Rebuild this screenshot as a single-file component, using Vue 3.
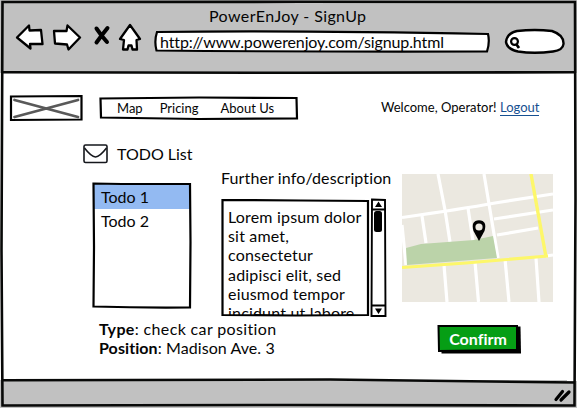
<script setup>
const menu = [
  { label: 'Map', cls: 'm-map' },
  { label: 'Pricing', cls: 'm-pricing' },
  { label: 'About Us', cls: 'm-about' },
]
const todos = ['Todo 1', 'Todo 2']
const lines = [
  'Lorem ipsum dolor',
  'sit amet,',
  'consectetur',
  'adipisci elit, sed',
  'eiusmod tempor',
  'incidunt ut labore',
]
</script>

<template>
  <div class="window">
    <header class="chrome">
      <div class="title"><span>PowerEnJoy - SignUp</span></div>
      <div class="toolbar">
        <svg class="back" viewBox="0 0 29 28" width="29" height="28">
          <path class="ico" d="M2 14.5 L14 2.5 L14.5 7.5 L26 7 L27.5 21 L15 21 L15.5 25.5 Z" />
        </svg>
        <svg class="forward" viewBox="0 0 30 28" width="30" height="28">
          <path class="ico" d="M2 8 L14.500 8 L15.500 2.500 L28 14.500 L16.500 26.500 L15 21.500 L3 20.500 Z" />
        </svg>
        <svg class="stop" viewBox="0 0 18 21" width="18" height="21">
          <path d="M3.500 3.500 L8.500 10.500 L14 17 M14.500 3 L9 10 L3.500 17.500" stroke="#000" stroke-width="4" stroke-linecap="round" fill="none" />
        </svg>
        <svg class="home" viewBox="0 0 24 29" width="24" height="29">
          <path class="ico" d="M12 2 L22 16 L18.500 17 L19 26.500 L14.500 26.500 L13.500 22.500 L10.500 22.500 L9.500 26.500 L5 26.500 L6 17 L2 16 Z" />
        </svg>
        <div class="url">
          <svg class="sketch" viewBox="0 0 337 24">
            <path d="M3 2 C80 1 180 1 334 4 Q336 12 333 21.500 Q160 22 2.500 20.500 Q0 11 3 2 Z" fill="#fff" />
          </svg>
          <span>http://www.powerenjoy.com/signup.html</span>
        </div>
        <svg class="search" viewBox="0 0 62 27" width="62" height="27">
          <path d="M13 3 Q31 1 48 3 Q60 7 59.500 16 Q59 22 49 23.500 Q30 26 14 23.500 Q3 21 2 14 Q3 5 13 3 Z" fill="#fff" stroke="#000" stroke-width="2.400" />
          <circle cx="10.500" cy="13.500" r="3.400" fill="#fff" stroke="#000" stroke-width="2.200" />
          <path d="M12.500 16.500 L15 20" stroke="#000" stroke-width="2.800" />
        </svg>
      </div>
    </header>

    <main class="page">
      <nav class="topbar">
        <svg class="logo" viewBox="0 0 74 28" width="74" height="28">
          <path d="M2 2.500 L72.500 2 L72.500 25.500 L2 26 Z" fill="#fff" stroke="#000" stroke-width="2.200" />
          <path d="M5.500 6 L69 23 M5.500 23 L69 6" stroke="#595959" stroke-width="2.800" stroke-linecap="round" />
        </svg>
        <div class="menu">
          <svg class="sketch" viewBox="0 0 200 25">
            <path d="M1.500 2.500 L100 1.500 L197.500 2 L198 22.500 L100 23 L2 21.500 Z" />
          </svg>
          <span v-for="m in menu" :key="m.label" :class="m.cls">{{ m.label }}</span>
        </div>
        <div class="account"><span>Welcome, Operator!</span> <a>Logout</a></div>
      </nav>

      <div class="body">
        <section class="left">
          <div class="heading">
            <svg viewBox="0 0 25 20" width="25" height="20">
              <rect x="1" y="1" width="23" height="17.500" rx="1.500" fill="#fff" stroke="#15171c" stroke-width="1.600" />
              <path d="M1.500 4 Q8 12.500 12.500 13 Q17 12.500 23.500 4" fill="none" stroke="#15171c" stroke-width="1.600" />
            </svg>
            <h1>TODO List</h1>
          </div>
          <div class="columns">
            <ul class="todos">
              <li v-for="(t, i) in todos" :key="t" :class="{ active: i === 0 }">{{ t }}</li>
              <svg class="sketch" viewBox="0 0 100 127">
                <path d="M1.500 1.500 L30 2 L98 2 L98.500 60 L98 125.500 Q50 126 1.500 124.500 L2 65 Z" />
              </svg>
            </ul>
            <div class="info">
              <h2>Further info/description</h2>
              <div class="reader">
                <div class="text">
                  <p><span v-for="l in lines" :key="l">{{ l }}</span></p>
                  <svg class="sketch" viewBox="0 0 149 119">
                    <path d="M1.500 2 L80 2.500 L147 3 L147 117 L75 117.500 L1.500 117 Z" />
                  </svg>
                </div>
                <svg class="scroll" viewBox="0 0 17 120" width="17" height="120">
                  <path d="M2 1.500 L15 2 L15.500 118 L1.500 118 Z M2 11.500 H15.500 M2 107.500 H15.500" fill="#fff" stroke="#000" stroke-width="1.900" />
                  <path d="M8.500 3.500 L12 9 L5 9 Z M5 110.500 L12 110.500 L8.500 116 Z" />
                  <rect x="4" y="13" width="8" height="21" rx="2.500" />
                </svg>
              </div>
            </div>
          </div>
          <div class="details">
            <div class="d-type"><b>Type</b>: check car position</div>
            <div class="d-pos"><b>Position</b>: Madison Ave. 3</div>
          </div>
        </section>

        <aside class="right">
          <svg class="map" viewBox="0 0 151 128" width="151" height="128">
            <rect width="151" height="128" fill="#ebe8e0" />
            <g fill="none" stroke="#fff" stroke-width="3.200">
              <path d="M0 43.500 Q60 35 93 29 L151 20" />
              <path d="M36 0 L43 36 L48 68 M82 0 L96 84 M92 45 L151 36 M95 61 L136 54" />
              <path d="M20 42 L24 69 M66 34 L71 67 M0 51 L4 91 M42 91 L45 128 M73 88 L76.500 128 M103 85 L107 128 M134 84 L137 128 M144 82 L151 81" />
            </g>
            <path d="M4 74 L19 70 L72 66 L91 62 L95 84 L5 91 Z" fill="#bbd3a9" />
            <path d="M0 93.500 L64 89 L146 82" fill="none" stroke="#fdf76a" stroke-width="3.200" />
            <path d="M129 0 L144 83" fill="none" stroke="#fdf76a" stroke-width="3.400" />
            <path d="M77 67 L71.500 57 Q68.500 46.500 77 46.200 Q85.500 46.500 82.500 57 Z" />
            <circle cx="77" cy="53" r="3.600" fill="#ebe8e0" />
          </svg>
          <button type="button">
            <svg class="btn-bg" viewBox="0 0 86 32">
              <path d="M5 3 L83.500 2.500 L84 29.500 L4.500 29.500 Z" fill="#000" />
              <path d="M1.500 2 L80 2 L80 26 L2 27 Z" fill="#069e15" stroke="#000" stroke-width="2" />
            </svg>
            <span>Confirm</span>
          </button>
        </aside>
      </div>
    </main>

    <footer class="status">
      <svg viewBox="0 0 20 16" width="20" height="16">
        <path d="M3 12.500 L9.500 4.500 M8 13 L16 5" stroke="#000" stroke-width="3.200" stroke-linecap="round" />
      </svg>
    </footer>

    <svg class="frame" viewBox="0 0 577 408">
      <path d="M2.500 2 L300 1.800 L575 2 L575.500 200 L574.500 405.500 L290 405 L2.500 405.500 L1.500 250 Z" />
      <path d="M3 72.300 L300 72.800 L575 72.300 M3 380.300 L330 379.500 L575 382.500" />
    </svg>
  </div>
</template>

<style>
body {
  background: #fff;
}
</style>

<style scoped>
.window {
  position: relative;
  display: flex;
  flex-direction: column;
  width: 577px;
  height: 408px;
  overflow: hidden;
  background: #fff;
  color: #050505;
  font-family: Lato, 'Open Sans', sans-serif;
  font-size: 16px;
  line-height: 20px;
  white-space: nowrap;
  font-variant-ligatures: none;
}
.window * {
  box-sizing: border-box;
}
svg {
  display: block;
  flex: none;
}
.frame {
  position: absolute;
  inset: 0;
  fill: none;
  stroke: #080908;
  stroke-width: 2.6;
}
.sketch {
  position: absolute;
  inset: 0;
  width: 100%;
  height: 100%;
  fill: none;
  stroke: #000;
  stroke-width: 2.2;
}
.ico {
  fill: #fff;
  stroke: #000;
  stroke-width: 2.3;
  stroke-linejoin: round;
}
.chrome {
  flex: none;
  height: 73px;
  padding-top: 6px;
  background: #c1c1c1;
}
.title {
  padding-left: 209px;
  height: 17px;
  letter-spacing: 0.4px;
}
.toolbar {
  display: flex;
  align-items: flex-start;
  padding-left: 15px;
}
.forward {
  margin-left: 8px;
}
.stop {
  margin: 2px 0 0 11px;
}
.home {
  margin-left: 7px;
}
.url {
  position: relative;
  width: 337px;
  height: 24px;
  margin: 7px 0 0 12px;
  padding: 2px 0 0 6px;
}
.url span {
  position: relative;
  letter-spacing: -0.13px;
}
.search {
  margin: 5px 0 0 13px;
}
.page {
  flex: 1;
  padding: 21px 0 0 9px;
}
.topbar {
  display: flex;
  height: 28px;
}
.menu {
  position: relative;
  display: flex;
  align-items: center;
  width: 200px;
  height: 25px;
  margin: 2px 0 0 16px;
  padding: 0 0 2px 18px;
  font-size: 13px;
}
.m-pricing {
  margin-left: 17px;
}
.m-about {
  margin-left: 22px;
}
.account {
  margin: 3px 0 0 82px;
  font-size: 13px;
}
.account a {
  color: #165091;
  border-bottom: 1px solid #165091;
}
.body {
  display: flex;
}
.left {
  flex: none;
  width: 319px;
  padding: 22px 0 0 74px;
}
.heading {
  display: flex;
  align-items: center;
  height: 20px;
}
h1,
h2,
p {
  margin: 0;
  font-size: 16px;
  font-weight: 400;
}
h1 {
  margin-left: 9px;
}
.columns {
  display: flex;
  margin-top: 4px;
  padding-left: 9px;
}
.todos {
  position: relative;
  flex: none;
  width: 100px;
  height: 127px;
  margin: 14px 0 0;
  padding: 2px;
  list-style: none;
}
.todos li {
  height: 25px;
  padding: 3px 0 0 7px;
}
.todos .active {
  background: #93baf2;
}
.todos li + li {
  padding-top: 2px;
}
.info {
  flex: none;
  margin-left: 29px;
}
h2 {
  letter-spacing: 0.12px;
}
.reader {
  display: flex;
  margin-top: 10px;
}
.text {
  position: relative;
  flex: none;
  width: 149px;
  height: 119px;
  padding: 9px 0 2px 7px;
}
.text p {
  height: 108px;
  overflow: hidden;
  line-height: 19.2px;
  letter-spacing: 0.18px;
}
.text p span {
  display: block;
}
.details {
  padding-left: 16px;
  margin-top: 1px;
  line-height: 19px;
}
.d-type {
  letter-spacing: 0.36px;
}
.d-pos {
  letter-spacing: 0.08px;
}
.right {
  flex: none;
  padding: 52px 0 0 74px;
}
button {
  position: relative;
  display: block;
  width: 86px;
  height: 32px;
  margin: 22px 0 0 35px;
  padding: 0 4px 3px 0;
  border: 0;
  background: none;
  color: #fff;
  font: 700 16px Lato, sans-serif;
  font-variant-ligatures: none;
}
.btn-bg {
  position: absolute;
  inset: 0;
  width: 100%;
  height: 100%;
}
button span {
  position: relative;
}
.status {
  display: flex;
  flex: none;
  align-items: flex-start;
  justify-content: flex-end;
  height: 28px;
  padding: 7px 4px 0 0;
  background: linear-gradient(to bottom left, #fff 0, #fff 1px, #c1c1c1 1px);
}
</style>
